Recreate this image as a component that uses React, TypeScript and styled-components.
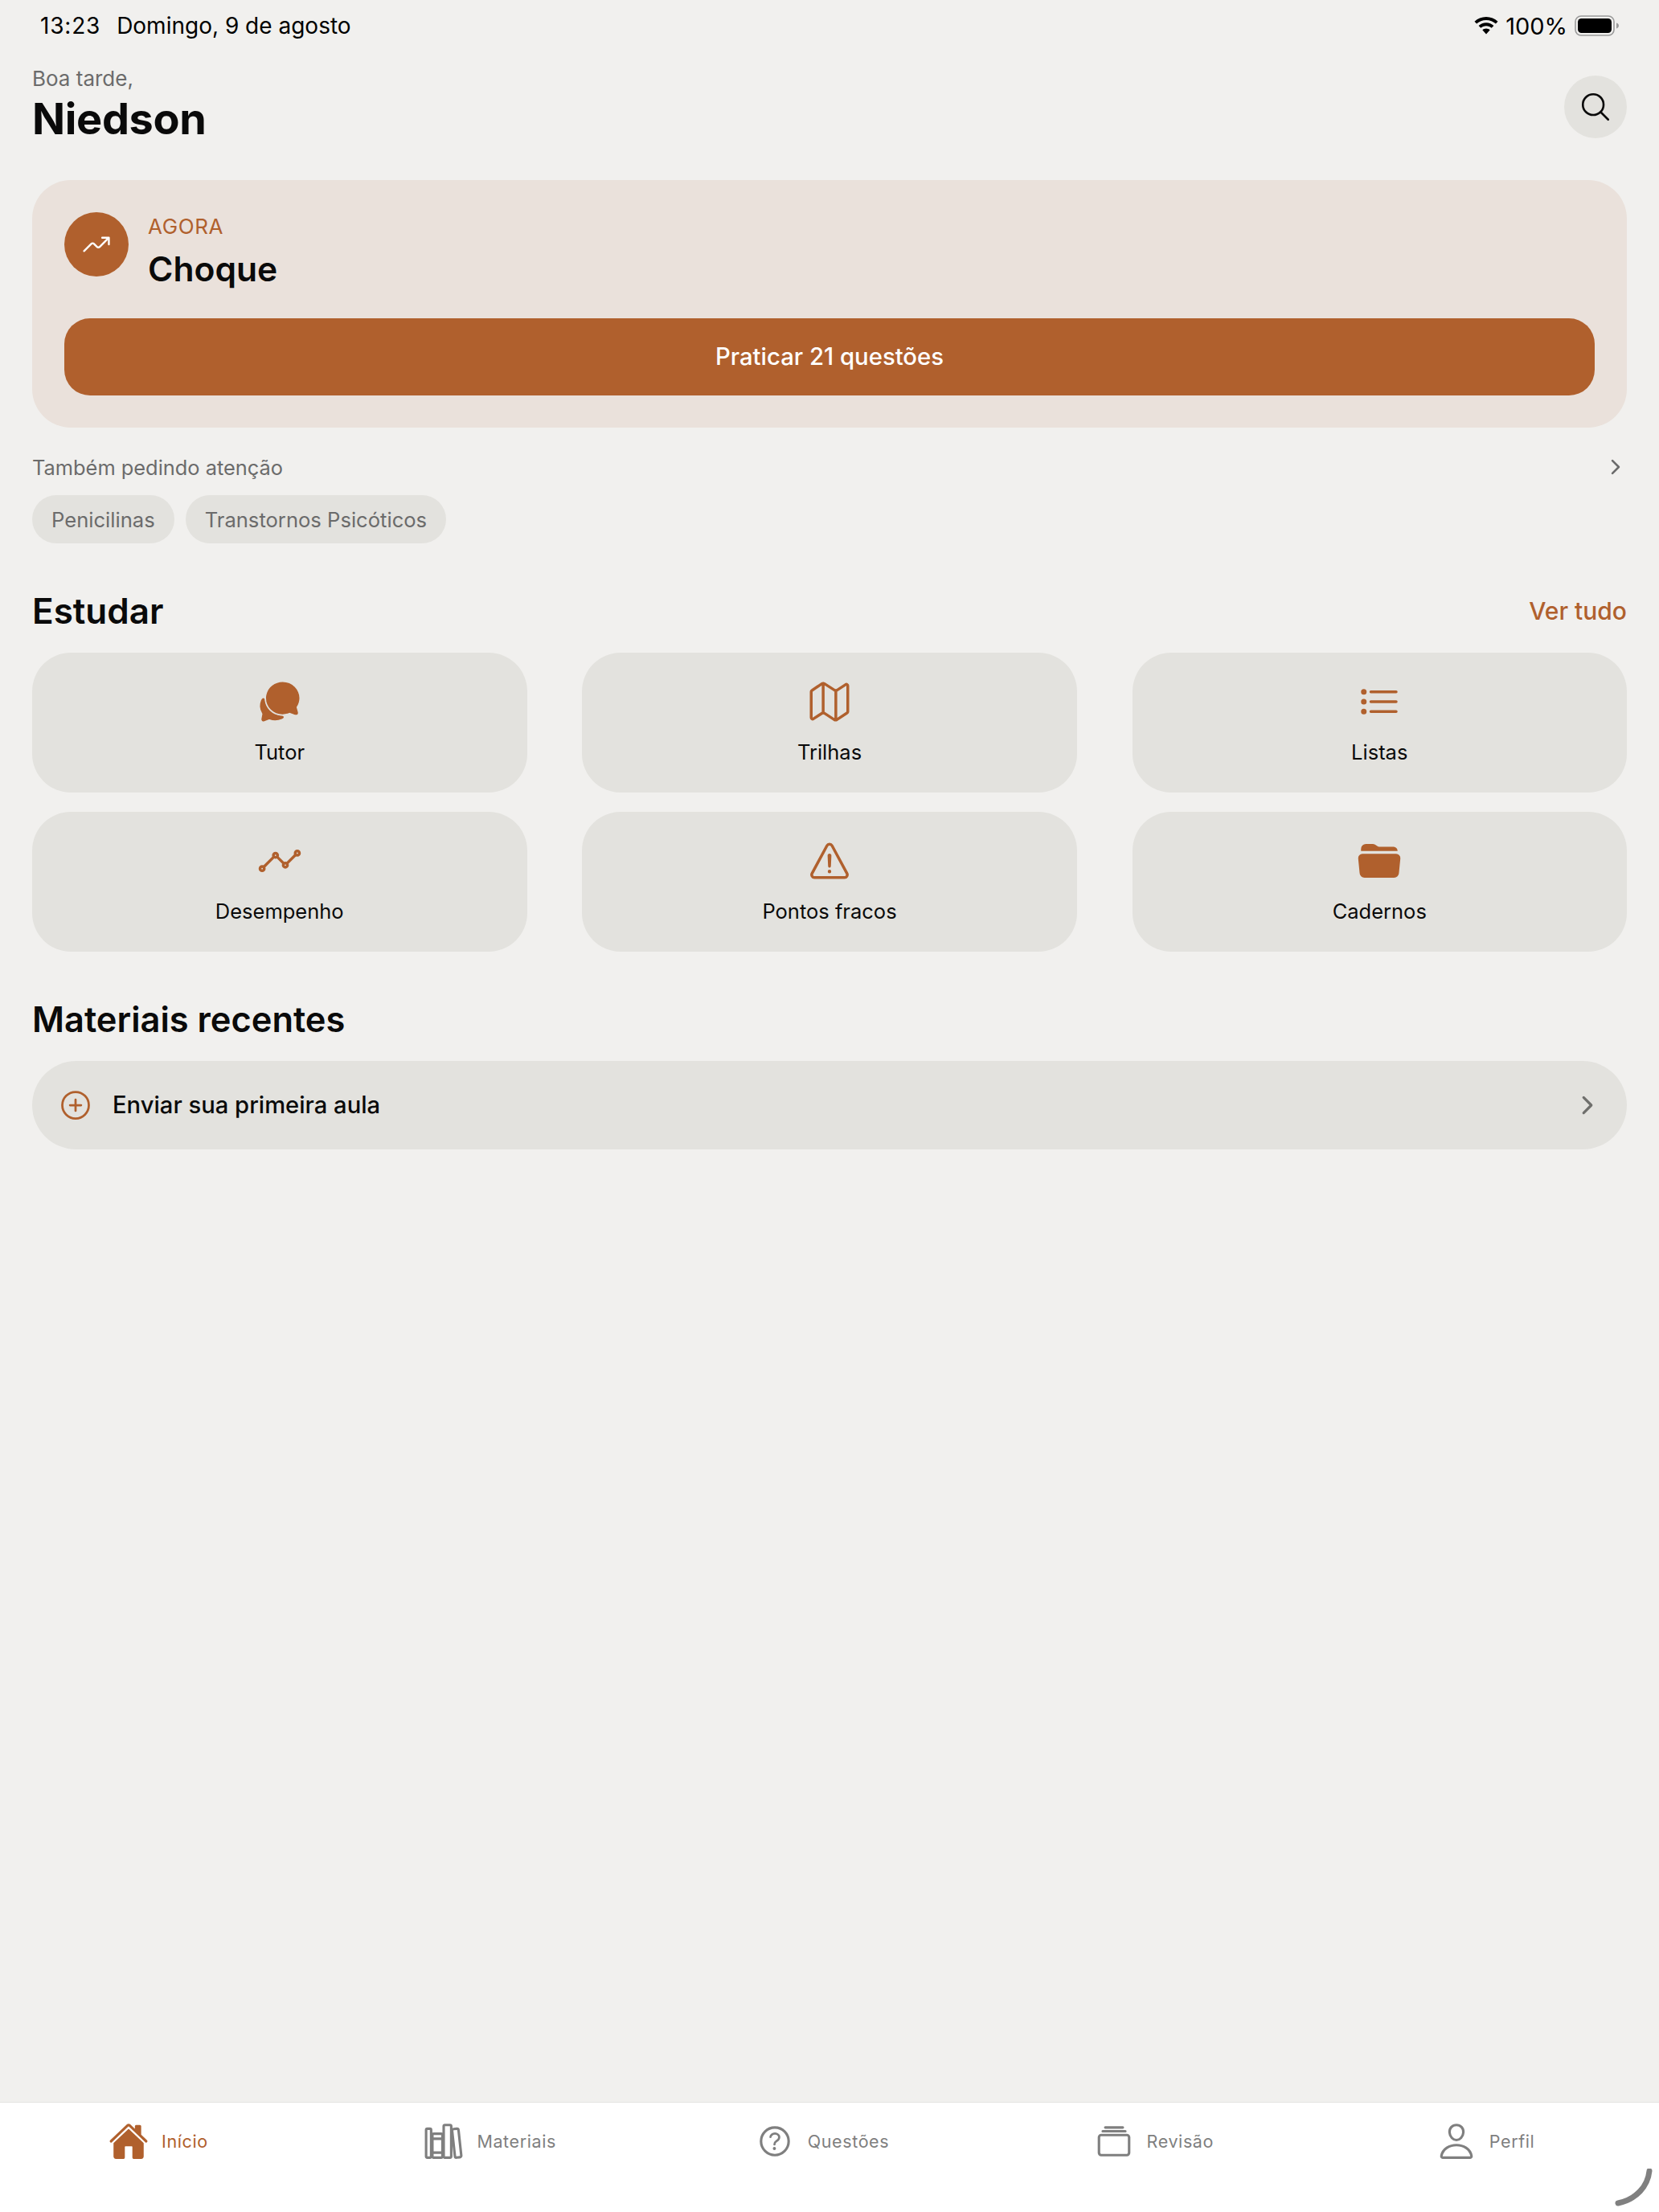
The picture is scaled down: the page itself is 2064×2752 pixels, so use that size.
import React from "react";
import styled, { createGlobalStyle } from "styled-components";
import {
  IoAddCircleOutline,
  IoAlbumsOutline,
  IoAnalyticsOutline,
  IoChatbubbles,
  IoChevronForward,
  IoFolderOpen,
  IoHelpCircleOutline,
  IoHome,
  IoLibraryOutline,
  IoListOutline,
  IoMapOutline,
  IoPersonOutline,
  IoSearchOutline,
  IoTrendingUp,
  IoWarningOutline,
} from "react-icons/io5";

const ACCENT = "#b0602d";

const GlobalStyle = createGlobalStyle`
  html, body {
    margin: 0;
    padding: 0;
    background: #f1f0ee;
  }
  * {
    box-sizing: border-box;
  }
`;

const studyItems = [
  { label: "Tutor", Icon: IoChatbubbles },
  { label: "Trilhas", Icon: IoMapOutline },
  { label: "Listas", Icon: IoListOutline },
  { label: "Desempenho", Icon: IoAnalyticsOutline },
  { label: "Pontos fracos", Icon: IoWarningOutline },
  { label: "Cadernos", Icon: IoFolderOpen },
];

const tabs = [
  { label: "Início", Icon: IoHome, active: true },
  { label: "Materiais", Icon: IoLibraryOutline },
  { label: "Questões", Icon: IoHelpCircleOutline },
  { label: "Revisão", Icon: IoAlbumsOutline },
  { label: "Perfil", Icon: IoPersonOutline },
];

const WifiIcon = () => (
  <svg width="30" height="22" viewBox="0 0 30 22" fill="currentColor">
    <path d="M15 0C9.400 0 4.300 2.200.5 5.800l2.600 2.800C6.200 5.700 10.400 3.900 15 3.900s8.800 1.800 11.900 4.700l2.600-2.800C25.700 2.200 20.600 0 15 0z" />
    <path d="M15 7.300c-3.600 0-6.900 1.400-9.400 3.700l2.700 2.800c1.800-1.600 4.100-2.600 6.700-2.600s4.900 1 6.700 2.600l2.700-2.800c-2.500-2.300-5.800-3.700-9.400-3.700z" />
    <path d="M15 14.400c-1.800 0-3.500.7-4.700 1.800L15 21.500l4.700-5.300c-1.200-1.100-2.900-1.800-4.700-1.800z" />
  </svg>
);

const BatteryIcon = () => (
  <svg width="56" height="26" viewBox="0 0 56 26">
    <rect x="1" y="1" width="48" height="24" rx="7" fill="none" stroke="#9a9a9a" strokeWidth="1.6" />
    <rect x="4" y="4" width="42" height="18" rx="4.500" fill="#000" />
    <path d="M52 9.500c1.800.6 3 1.900 3 3.500s-1.200 2.900-3 3.500z" fill="#9a9a9a" />
  </svg>
);

export default function App() {
  return (
    <Page>
      <GlobalStyle />
      <StatusBar>
        <StatusLeft>
          <StatusTime>13:23</StatusTime>
          <span>Domingo, 9 de agosto</span>
        </StatusLeft>
        <StatusRight>
          <WifiIcon />
          <BatteryLevel>100%</BatteryLevel>
          <BatteryIcon />
        </StatusRight>
      </StatusBar>

      <Content>
        <Header>
          <div>
            <Greeting>Boa tarde,</Greeting>
            <UserName>Niedson</UserName>
          </div>
          <SearchButton>
            <IoSearchOutline size={42} />
          </SearchButton>
        </Header>

        <FocusCard>
          <FocusTop>
            <FocusBadge>
              <IoTrendingUp size={38} />
            </FocusBadge>
            <div>
              <FocusEyebrow>AGORA</FocusEyebrow>
              <FocusTitle>Choque</FocusTitle>
            </div>
          </FocusTop>
          <PracticeButton>Praticar 21 questões</PracticeButton>
        </FocusCard>

        <AttentionRow>
          <span>Também pedindo atenção</span>
          <IoChevronForward size={28} />
        </AttentionRow>
        <Chips>
          <Chip>Penicilinas</Chip>
          <Chip>Transtornos Psicóticos</Chip>
        </Chips>

        <StudyHeading>
          <SectionTitle>Estudar</SectionTitle>
          <SeeAll>Ver tudo</SeeAll>
        </StudyHeading>
        <StudyGrid>
          {studyItems.map(({ label, Icon }) => (
            <StudyCard key={label}>
              <Icon size={56} color={ACCENT} />
              <StudyLabel>{label}</StudyLabel>
            </StudyCard>
          ))}
        </StudyGrid>

        <RecentTitle>Materiais recentes</RecentTitle>
        <UploadRow>
          <IoAddCircleOutline size={44} color={ACCENT} />
          <UploadText>Enviar sua primeira aula</UploadText>
          <IoChevronForward size={34} color="#6f6f6c" />
        </UploadRow>
      </Content>

      <TabBar>
        {tabs.map(({ label, Icon, active }) => (
          <Tab key={label} $active={active}>
            <Icon size={50} />
            <span>{label}</span>
          </Tab>
        ))}
        <HomeCorner width="50" height="50" viewBox="0 0 50 50">
          <path d="M44 3C42 22 28 38 5 43" fill="none" stroke="#808080" strokeWidth="7" strokeLinecap="round" />
        </HomeCorner>
      </TabBar>
    </Page>
  );
}

const Page = styled.div`
  position: relative;
  width: 2064px;
  height: 2752px;
  display: flex;
  flex-direction: column;
  background: #f1f0ee;
  color: #0a0a0a;
  font-family: Inter, "Noto Sans", sans-serif;
  overflow: hidden;
`;

const StatusBar = styled.div`
  height: 64px;
  padding: 0 50px;
  display: flex;
  align-items: center;
  justify-content: space-between;
  font-size: 28px;
  color: #000;
`;

const StatusLeft = styled.div`
  display: flex;
  gap: 20px;
`;

const StatusTime = styled.span`
  letter-spacing: 0.8px;
`;

const StatusRight = styled.div`
  display: flex;
  align-items: center;
  gap: 9px;
  margin-right: -1px;
`;

const BatteryLevel = styled.span`
  font-size: 29px;
`;

const Content = styled.div`
  flex: 1;
  padding: 16px 40px 0;
`;

const Header = styled.div`
  height: 144px;
  display: flex;
  justify-content: space-between;
  align-items: flex-start;
`;

const Greeting = styled.div`
  font-size: 26px;
  line-height: 36px;
  color: #6b6b6b;
`;

const UserName = styled.div`
  font-size: 54px;
  line-height: 64px;
  font-weight: 700;
  letter-spacing: -0.35px;
`;

const SearchButton = styled.div`
  width: 78px;
  height: 78px;
  margin-top: 14px;
  border-radius: 50%;
  background: #e3e2de;
  display: flex;
  align-items: center;
  justify-content: center;
`;

const FocusCard = styled.div`
  height: 308px;
  padding: 40px;
  border-radius: 48px;
  background: #eae1db;
`;

const FocusTop = styled.div`
  display: flex;
  gap: 24px;
  height: 132px;
`;

const FocusBadge = styled.div`
  width: 80px;
  height: 80px;
  border-radius: 50%;
  background: ${ACCENT};
  color: #fff;
  display: flex;
  align-items: center;
  justify-content: center;
`;

const FocusEyebrow = styled.div`
  margin-top: 1px;
  font-size: 26px;
  line-height: 34px;
  letter-spacing: 0.6px;
  color: ${ACCENT};
`;

const FocusTitle = styled.div`
  margin-top: 8px;
  font-size: 42.600px;
  line-height: 56px;
  font-weight: 600;
`;

const PracticeButton = styled.div`
  height: 96px;
  padding-bottom: 2px;
  border-radius: 32px;
  background: ${ACCENT};
  color: #fff;
  font-size: 29.300px;
  font-weight: 500;
  display: flex;
  align-items: center;
  justify-content: center;
`;

const AttentionRow = styled.div`
  height: 34px;
  margin-top: 32px;
  margin-bottom: 18px;
  display: flex;
  align-items: center;
  justify-content: space-between;
  font-size: 25.400px;
  color: #6b6b6b;
`;

const Chips = styled.div`
  display: flex;
  gap: 14px;
`;

const Chip = styled.div`
  height: 60px;
  padding: 0 24px;
  border-radius: 30px;
  background: #e3e2de;
  color: #6b6b6b;
  font-size: 25.600px;
  display: flex;
  align-items: center;
`;

const StudyHeading = styled.div`
  margin-top: 56px;
  height: 56px;
  display: flex;
  align-items: center;
  justify-content: space-between;
`;

const SectionTitle = styled.div`
  font-size: 44px;
  line-height: 56px;
  font-weight: 600;
`;

const SeeAll = styled.div`
  font-size: 30px;
  font-weight: 500;
  color: ${ACCENT};
`;

const StudyGrid = styled.div`
  margin-top: 24px;
  display: grid;
  grid-template-columns: repeat(3, 615.500px);
  justify-content: space-between;
  row-gap: 24px;
`;

const StudyCard = styled.div`
  height: 174px;
  padding-top: 33px;
  border-radius: 48px;
  background: #e3e2de;
  display: flex;
  flex-direction: column;
  align-items: center;
`;

const StudyLabel = styled.div`
  margin-top: 17px;
  font-size: 25.500px;
  line-height: 36px;
`;

const RecentTitle = styled(SectionTitle)`
  margin-top: 56px;
  font-size: 43.400px;
`;

const UploadRow = styled.div`
  height: 110px;
  margin-top: 24px;
  padding: 0 32px;
  border-radius: 55px;
  background: #e3e2de;
  display: flex;
  align-items: center;
  gap: 24px;
`;

const UploadText = styled.div`
  flex: 1;
  padding-bottom: 1px;
  font-size: 29.200px;
  font-weight: 500;
`;

const TabBar = styled.div`
  position: relative;
  height: 137px;
  border-top: 1px solid #e4e4e2;
  background: #fff;
  display: grid;
  grid-template-columns: repeat(5, 1fr);
`;

const Tab = styled.div<{ $active?: boolean }>`
  height: 64px;
  margin-top: 16px;
  padding-right: 19px;
  display: flex;
  align-items: center;
  justify-content: center;
  gap: 16px;
  color: ${(p) => (p.$active ? ACCENT : "#7f7f7f")};
  font-size: 21.500px;
  letter-spacing: 0.6px;
`;

const HomeCorner = styled.svg`
  position: absolute;
  right: 6px;
  bottom: 4px;
`;
